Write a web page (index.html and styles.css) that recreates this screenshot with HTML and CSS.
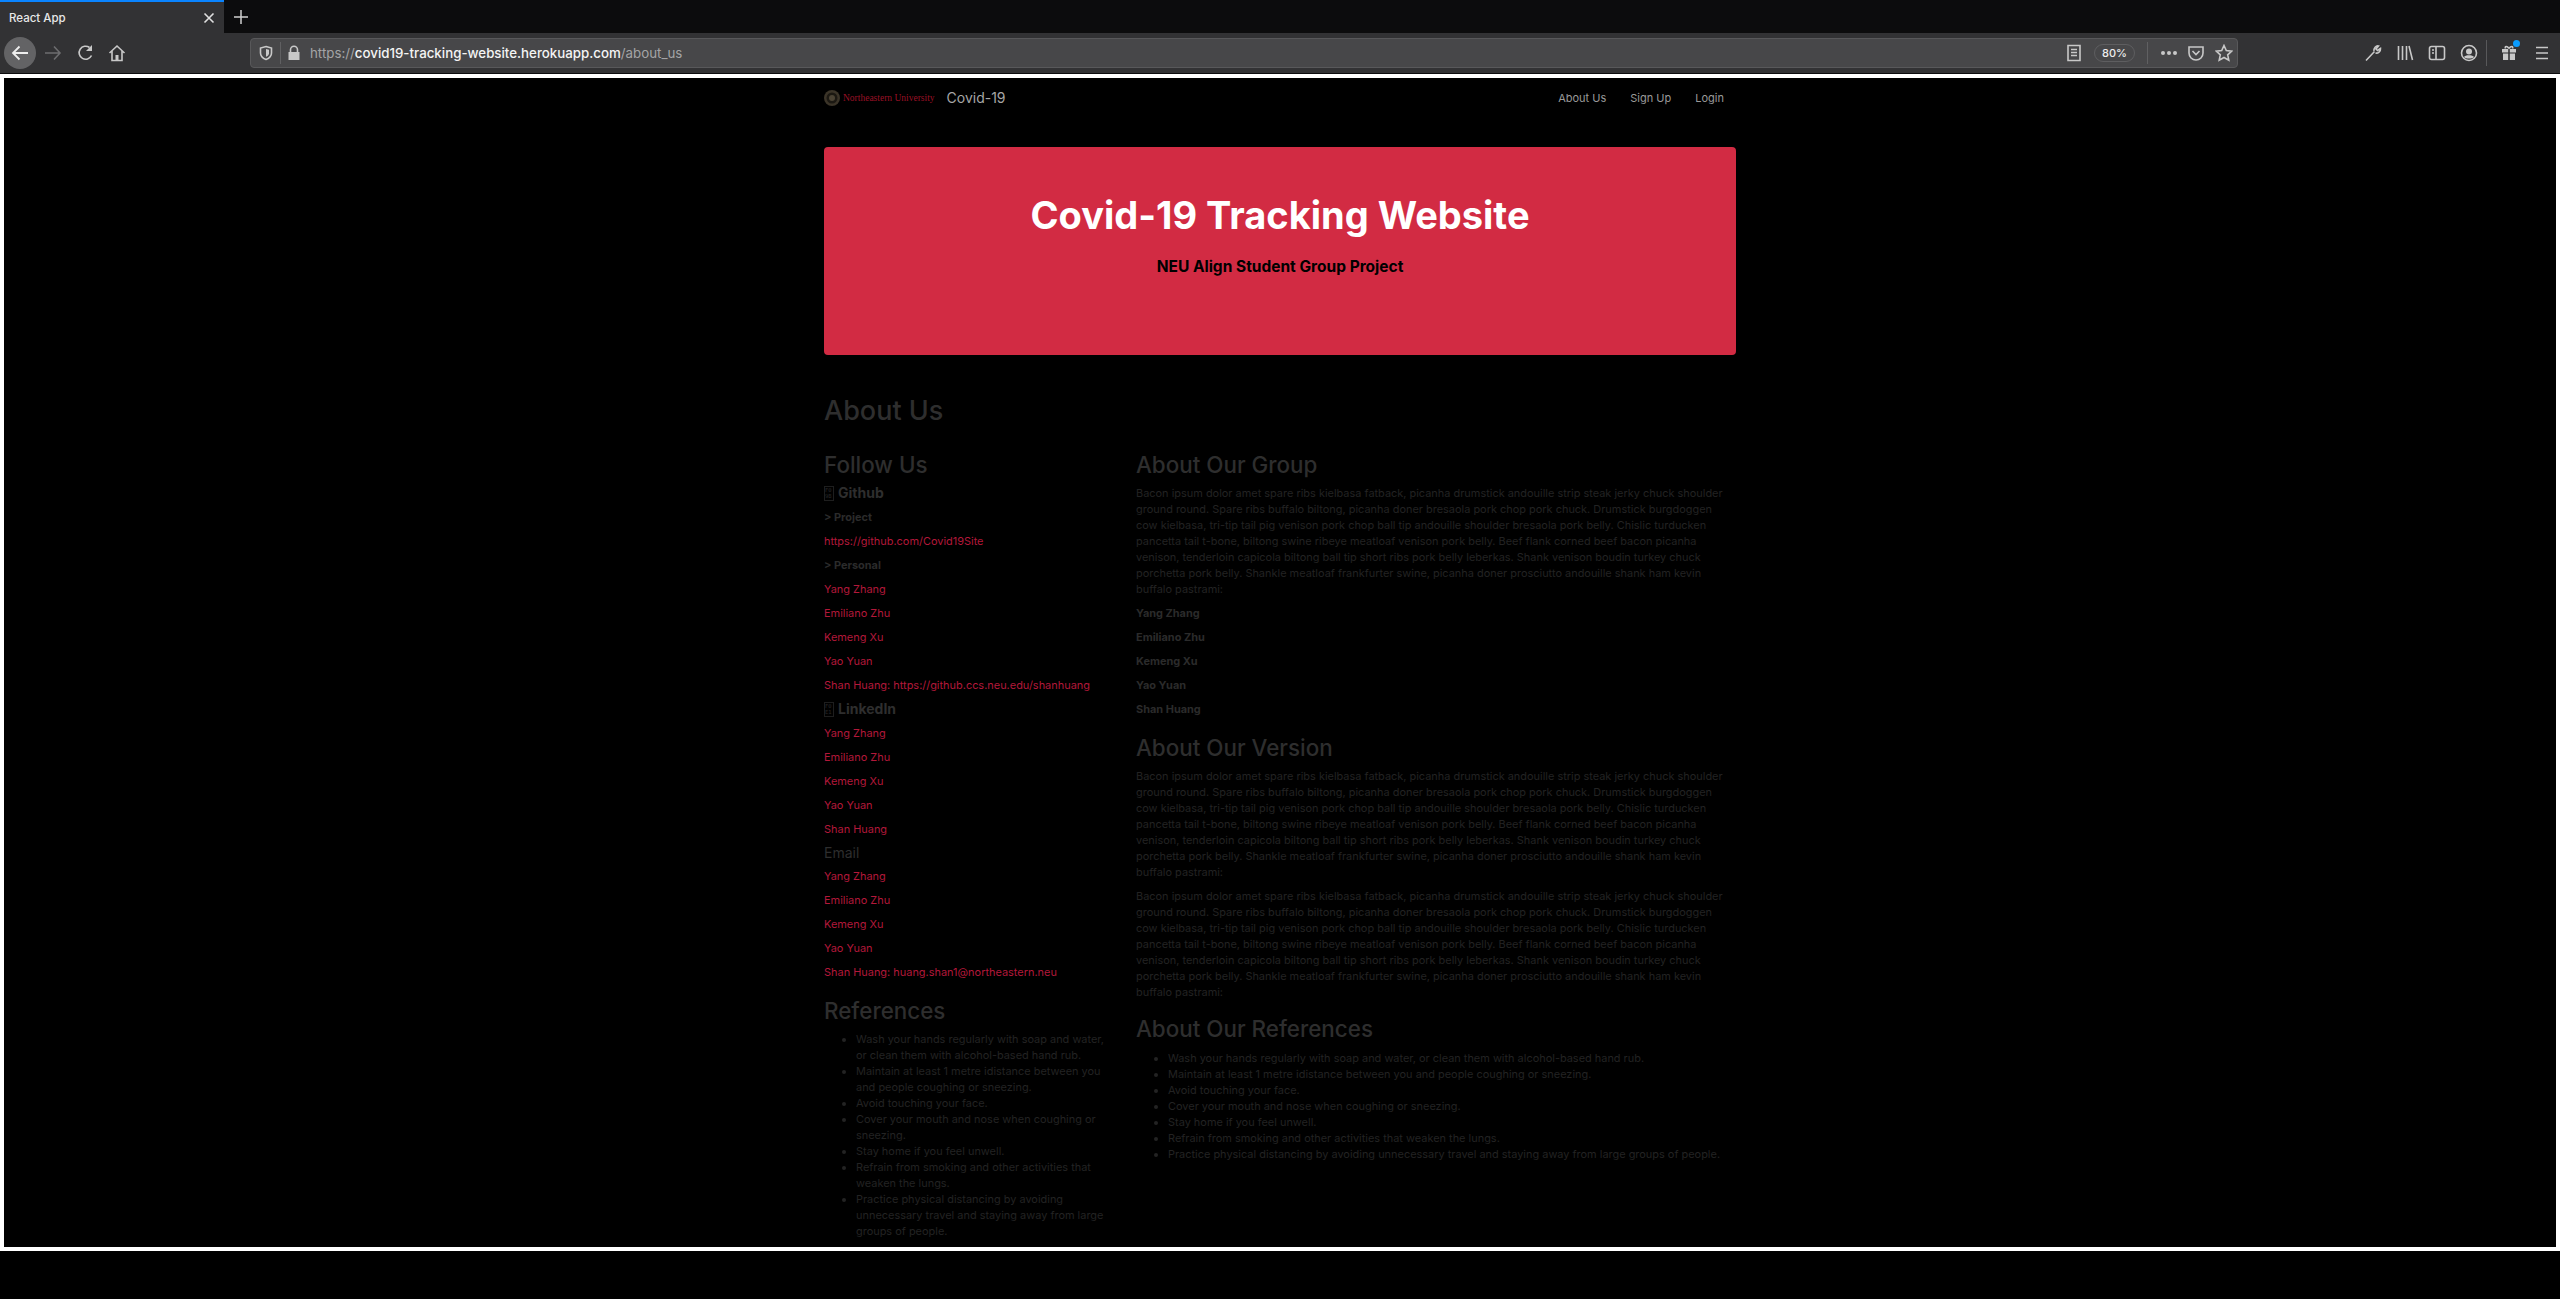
FILE: index.html
```html
<!DOCTYPE html>
<html lang="en">
<head>
<meta charset="utf-8">
<title>React App</title>
<link rel="stylesheet" href="styles.css">
</head>
<body>
<div class="tabstrip">
  <div class="tab">
    <span class="tab-title">React App</span>
    <svg class="tab-close" width="12" height="12" viewBox="0 0 12 12"><path d="M1.5 1.5l9 9M10.500 1.500l-9 9"/></svg>
  </div>
  <svg class="new-tab" width="16" height="16" viewBox="0 0 16 16"><path d="M8 1v14M1 8h14"/></svg>
</div>
<div class="toolbar">
  <div class="btn-back"><svg width="22" height="22" viewBox="0 0 22 22"><path d="M19 11H4M10.500 4.500L4 11l6.500 6.500"/></svg></div>
  <svg class="ico ico-fwd" width="20" height="20" viewBox="0 0 20 20"><path d="M2 10h15M11 3.500l6 6.500-6 6.500"/></svg>
  <svg class="ico ico-reload" width="20" height="20" viewBox="0 0 20 20"><path d="M15.500 12.500A6.500 6.500 0 1 1 13.500 4.500"/><path class="fill" d="M16 2v6h-6z"/></svg>
  <svg class="ico ico-home" width="20" height="20" viewBox="0 0 20 20"><path d="M2.500 10L10 3l7.500 7M5 8v9.500h10V8"/><path class="fill" d="M8.500 12h3v5.500h-3z"/></svg>
  <div class="urlbar">
    <svg class="ico ico-shield" width="16" height="16" viewBox="0 0 16 16"><path d="M8 1.500l5.500 1.500v5c0 3.500-3 5.500-5.500 6.500C5.500 13.500 2.500 11.500 2.500 8V3z"/><path class="fill" d="M8 4l3 .8v3.400C11 10 9.500 11 8 11.800z"/></svg>
    <span class="url-sep"></span>
    <svg class="ico ico-lock" width="14" height="16" viewBox="0 0 14 16"><path d="M3.500 7V4.800a3.500 3.500 0 0 1 7 0V7"/><path class="fill" d="M1.500 7h11v8h-11z"/></svg>
    <span class="url"><span class="url-dim">https://</span><span class="url-host">covid19-tracking-website.herokuapp.com</span><span class="url-dim">/about_us</span></span>
    <svg class="ico ico-reader" width="16" height="18" viewBox="0 0 16 18"><path d="M2 1.500h12v15H2zM5 5.500h6M5 8.500h6M5 11.500h6"/></svg>
    <span class="zoom-pill">80%</span>
    <span class="url-sep url-sep-b"></span>
    <svg class="ico ico-dots" width="16" height="6" viewBox="0 0 16 6"><circle class="fill" cx="2" cy="3" r="2"/><circle class="fill" cx="8" cy="3" r="2"/><circle class="fill" cx="14" cy="3" r="2"/></svg>
    <svg class="ico ico-pocket" width="16" height="16" viewBox="0 0 16 16"><path d="M1 2h14v6a7 7 0 0 1-14 0zM4.500 6L8 9.500 11.500 6"/></svg>
    <svg class="ico ico-star" width="18" height="18" viewBox="0 0 18 18"><path d="M9 1.500l2.300 5 5.400.6-4 3.700 1.100 5.400L9 13.500l-4.800 2.700 1.100-5.400-4-3.700 5.400-.6z"/></svg>
  </div>
  <svg class="ico ico-wrench" width="18" height="18" viewBox="0 0 18 18"><path d="M2 16.500l8.500-9M10 7c-.5-3 2-5.500 4.500-5l-2.500 3 1.500 1.500 3-2c.3 3-2.500 5-5 4.500" /></svg>
  <svg class="ico ico-lib" width="18" height="18" viewBox="0 0 18 18"><path d="M2.500 2v14M6.500 2v14M10.500 2v14M13 2l3.500 14"/></svg>
  <svg class="ico ico-side" width="18" height="18" viewBox="0 0 18 18"><rect x="1.500" y="2.500" width="15" height="13" rx="2"/><path d="M8 2.500v13M4 6h2M4 9h2"/></svg>
  <svg class="ico ico-acct" width="18" height="18" viewBox="0 0 18 18"><circle cx="9" cy="9" r="7.500"/><circle class="fill" cx="9" cy="7.500" r="3"/><path class="fill" d="M4 13c1-2.500 9-2.500 10 0-1.500 2-8.500 2-10 0z"/></svg>
  <span class="tool-sep"></span>
  <div class="gift">
    <svg width="18" height="18" viewBox="0 0 18 18"><path class="fill" d="M2 5h6.200v3.500H2zM9.800 5H16v3.500H9.800zM3 9.500h5.200V16H3zM9.800 9.500H15V16H9.800z"/><path d="M9 4.500C7 1.500 4.500 2 5.500 4.500M9 4.500c2-3 4.500-2.500 3.500 0"/></svg>
    <span class="gift-dot"></span>
  </div>
  <svg class="ico ico-menu" width="14" height="14" viewBox="0 0 14 14"><path d="M1 1.500h12M1 7h12M1 12.500h12"/></svg>
</div>
<div class="toolbar-line"></div>
<div class="viewport">
  <div class="page">
    <nav class="nav">
      <div class="brand">
        <svg class="seal" width="16" height="16" viewBox="0 0 16 16"><circle cx="8" cy="8" r="8" fill="#3b3428"/><circle cx="8" cy="8" r="5.500" fill="#1b1812"/><circle cx="8" cy="8" r="3" fill="#4a4233"/></svg>
        <span class="uni">Northeastern University</span>
        <span class="brand-name">Covid-19</span>
      </div>
      <div class="nav-links">
        <span>About Us</span><span>Sign Up</span><span>Login</span>
      </div>
    </nav>
    <header class="hero">
      <h1>Covid-19 Tracking Website</h1>
      <h2 class="hero-sub">NEU Align Student Group Project</h2>
    </header>
    <h2 class="page-title">About Us</h2>
    <div class="columns">
      <aside class="side">
        <h3>Follow Us</h3>
        <h5><span class="tofu">F0<br>9B</span>Github</h5>
        <p class="sub">&gt; Project</p>
        <p class="link">https://github.com/Covid19Site</p>
        <p class="sub">&gt; Personal</p>
        <p class="link">Yang Zhang</p>
        <p class="link">Emiliano Zhu</p>
        <p class="link">Kemeng Xu</p>
        <p class="link">Yao Yuan</p>
        <p class="link">Shan Huang: https://github.ccs.neu.edu/shanhuang</p>
        <h5><span class="tofu">F0<br>E1</span>LinkedIn</h5>
        <p class="link">Yang Zhang</p>
        <p class="link">Emiliano Zhu</p>
        <p class="link">Kemeng Xu</p>
        <p class="link">Yao Yuan</p>
        <p class="link">Shan Huang</p>
        <h5 class="plain">Email</h5>
        <p class="link">Yang Zhang</p>
        <p class="link">Emiliano Zhu</p>
        <p class="link">Kemeng Xu</p>
        <p class="link">Yao Yuan</p>
        <p class="link">Shan Huang: huang.shan1@northeastern.neu</p>
        <h3 class="later">References</h3>
        <ul>
          <li>Wash your hands regularly with soap and water, or clean them with alcohol-based hand rub.</li>
          <li>Maintain at least 1 metre idistance between you and people coughing or sneezing.</li>
          <li>Avoid touching your face.</li>
          <li>Cover your mouth and nose when coughing or sneezing.</li>
          <li>Stay home if you feel unwell.</li>
          <li>Refrain from smoking and other activities that weaken the lungs.</li>
          <li>Practice physical distancing by avoiding unnecessary travel and staying away from large groups of people.</li>
        </ul>
      </aside>
      <main class="content">
        <h3>About Our Group</h3>
        <p>Bacon ipsum dolor amet spare ribs kielbasa fatback, picanha drumstick andouille strip steak jerky chuck shoulder ground round. Spare ribs buffalo biltong, picanha doner bresaola pork chop pork chuck. Drumstick burgdoggen cow kielbasa, tri-tip tail pig venison pork chop ball tip andouille shoulder bresaola pork belly. Chislic turducken pancetta tail t-bone, biltong swine ribeye meatloaf venison pork belly. Beef flank corned beef bacon picanha venison, tenderloin capicola biltong ball tip short ribs pork belly leberkas. Shank venison boudin turkey chuck porchetta pork belly. Shankle meatloaf frankfurter swine, picanha doner prosciutto andouille shank ham kevin buffalo pastrami:</p>
        <p class="sub">Yang Zhang</p>
        <p class="sub">Emiliano Zhu</p>
        <p class="sub">Kemeng Xu</p>
        <p class="sub">Yao Yuan</p>
        <p class="sub">Shan Huang</p>
        <h3 class="later">About Our Version</h3>
        <p>Bacon ipsum dolor amet spare ribs kielbasa fatback, picanha drumstick andouille strip steak jerky chuck shoulder ground round. Spare ribs buffalo biltong, picanha doner bresaola pork chop pork chuck. Drumstick burgdoggen cow kielbasa, tri-tip tail pig venison pork chop ball tip andouille shoulder bresaola pork belly. Chislic turducken pancetta tail t-bone, biltong swine ribeye meatloaf venison pork belly. Beef flank corned beef bacon picanha venison, tenderloin capicola biltong ball tip short ribs pork belly leberkas. Shank venison boudin turkey chuck porchetta pork belly. Shankle meatloaf frankfurter swine, picanha doner prosciutto andouille shank ham kevin buffalo pastrami:</p>
        <p>Bacon ipsum dolor amet spare ribs kielbasa fatback, picanha drumstick andouille strip steak jerky chuck shoulder ground round. Spare ribs buffalo biltong, picanha doner bresaola pork chop pork chuck. Drumstick burgdoggen cow kielbasa, tri-tip tail pig venison pork chop ball tip andouille shoulder bresaola pork belly. Chislic turducken pancetta tail t-bone, biltong swine ribeye meatloaf venison pork belly. Beef flank corned beef bacon picanha venison, tenderloin capicola biltong ball tip short ribs pork belly leberkas. Shank venison boudin turkey chuck porchetta pork belly. Shankle meatloaf frankfurter swine, picanha doner prosciutto andouille shank ham kevin buffalo pastrami:</p>
        <h3 class="later-tight">About Our References</h3>
        <ul>
          <li>Wash your hands regularly with soap and water, or clean them with alcohol-based hand rub.</li>
          <li>Maintain at least 1 metre idistance between you and people coughing or sneezing.</li>
          <li>Avoid touching your face.</li>
          <li>Cover your mouth and nose when coughing or sneezing.</li>
          <li>Stay home if you feel unwell.</li>
          <li>Refrain from smoking and other activities that weaken the lungs.</li>
          <li>Practice physical distancing by avoiding unnecessary travel and staying away from large groups of people.</li>
        </ul>
      </main>
    </div>
  </div>
</div>
</body>
</html>
```

FILE: styles.css
```css
* { box-sizing: border-box; }
html, body { margin: 0; height: 1299px; overflow: hidden; background: #000; }
body { font-family: Inter, "Liberation Sans", sans-serif; font-size: 10.950px; line-height: 16px; color: #232323; display: flex; flex-direction: column; }

/* browser chrome */
.tabstrip { height: 33px; background: #0c0c0d; display: flex; align-items: center; flex: none; }
.tab { width: 224px; height: 33px; background: #323234; border-top: 2px solid #0a84ff; display: flex; align-items: center; justify-content: space-between; padding: 0 9px 0 9px; }
.tab-title { font-size: 11.500px; font-weight: 500; color: #e8e8e8; }
.tab-close { stroke: #e0e0e0; stroke-width: 1.6; fill: none; }
.new-tab { margin-left: 9px; stroke: #d0d0d0; stroke-width: 1.500; fill: none; }

.toolbar { height: 40px; background: #323234; display: flex; align-items: center; flex: none; padding-left: 4px; }
.toolbar svg { fill: none; stroke: #c8c8c8; stroke-width: 1.6; flex: none; }
.toolbar svg .fill { fill: #c8c8c8; stroke: none; }
.btn-back { width: 32px; height: 32px; border-radius: 50%; background: #636365; display: flex; align-items: center; justify-content: center; }
.btn-back svg { stroke: #eee; stroke-width: 1.8; }
.toolbar .ico-fwd { margin-left: 7px; stroke: #6d6d6f; }
.ico-reload { margin-left: 13px; }
.ico-home { margin-left: 11px; }
.urlbar { width: 1988px; height: 30px; margin-left: 123px; background: #474749; border: 1px solid #58585a; border-radius: 4px; display: flex; align-items: center; }
.ico-shield { margin-left: 7px; }
.url-sep { width: 1px; height: 22px; background: #606062; margin-left: 6px; }
.ico-lock { margin-left: 6px; }
.toolbar .ico-lock .fill { fill: #c8c8c8; }
.url { margin-left: 9px; font-size: 13.300px; letter-spacing: 0; white-space: nowrap; flex: 1; }
.url-dim { color: #a4a4a6; }
.url-host { color: #f4f4f4; font-weight: 500; }
.toolbar .ico-reader { stroke: #c8c8c8; }
.zoom-pill { width: 41px; height: 18px; margin-left: 12px; border: 1px solid #5e5e60; border-radius: 9px; font-size: 11px; line-height: 16px; text-align: center; color: #eee; font-weight: 500; }
.url-sep-b { margin-left: 12px; }
.ico-dots { margin-left: 13px; }
.ico-pocket { margin-left: 11px; }
.ico-star { margin-left: 11px; margin-right: 4px; }
.ico-wrench { margin-left: 126px; }
.ico-lib, .ico-side, .ico-acct { margin-left: 14px; }
.tool-sep { width: 1px; height: 26px; background: #58585a; margin-left: 8px; }
.gift { position: relative; width: 18px; height: 18px; margin-left: 13px; }
.gift-dot { position: absolute; top: -4px; right: -2px; width: 7px; height: 7px; border-radius: 50%; background: #0a9cff; }
.ico-menu { margin-left: 17px; }
.toolbar-line { height: 1px; background: #0c0c0d; flex: none; }

/* page frame */
.viewport { height: 1177px; flex: none; border: 4px solid #fff; background: #000; overflow: hidden; }
.page { width: 912px; margin: 0 auto; }

.nav { height: 40px; margin-bottom: 29px; display: flex; align-items: center; justify-content: space-between; }
.brand { display: flex; align-items: center; }
.uni { font-family: "Liberation Serif", serif; font-size: 9.500px; color: #9a1026; margin-left: 3px; white-space: nowrap; }
.brand-name { font-size: 14px; color: #a6a6a6; margin-left: 12px; }
.nav-links { display: flex; gap: 24px; padding-right: 12px; color: #999; font-size: 11px; }

.hero { height: 208px; background: #d22b43; border-radius: 4px; margin-bottom: 40px; padding-top: 44px; text-align: center; }
.hero h1 { margin: 0; font-size: 38px; line-height: 48px; font-weight: 700; color: #fff; }
.hero-sub { margin: 18px 0 0; font-size: 15.500px; line-height: 20px; font-weight: 700; color: #000; }

.page-title { margin: 0 0 24px; font-size: 27px; line-height: 32px; font-weight: 500; color: #2e2e2e; }
.columns { display: grid; grid-template-columns: 288px 600px; column-gap: 24px; }
h3 { margin: 0 0 6px; font-size: 22.400px; line-height: 28px; font-weight: 500; color: #2e2e2e; }
h3.later { margin-top: 17px; }
h3.later-tight { margin-top: 15px; }
h5 { margin: 0 0 8px; font-size: 14px; line-height: 16px; font-weight: 700; color: #2e2e2e; display: flex; align-items: center; }
h5.plain { font-weight: 400; line-height: 15px; }
.tofu { width: 8px; height: 13px; margin: 0 5px 0 1px; font-family: "DejaVu Sans Mono", monospace; font-size: 5.500px; line-height: 6px; font-weight: 400; outline: 1px solid #1e1e1e; color: #2a2a2a; }
p { margin: 0 0 8px; }
.sub { font-weight: 700; color: #2b2b2b; }
.link { color: #b3183a; white-space: nowrap; }
ul { margin: 0; padding-left: 32px; }
.content ul { margin-top: 7px; }
```
